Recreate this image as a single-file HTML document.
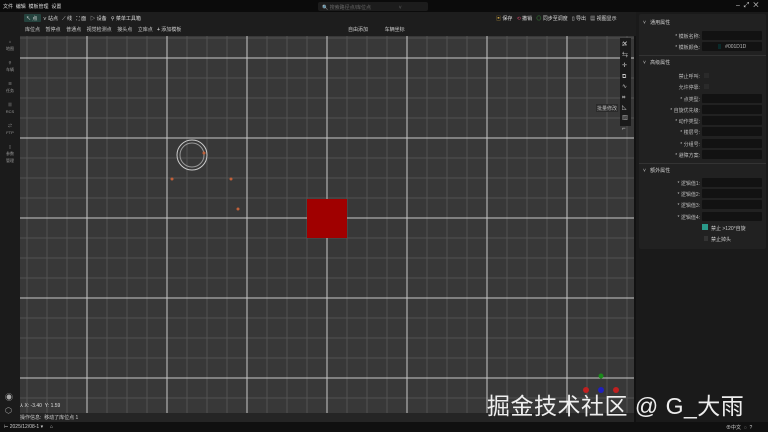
<!DOCTYPE html><html><head><meta charset="utf-8"><style>
*{margin:0;padding:0;box-sizing:border-box}
body{width:768px;height:432px;background:#121212;font-family:"Liberation Sans","Noto Sans CJK SC",sans-serif;color:#ccc;font-size:5px;position:relative;overflow:hidden}
.a{position:absolute;white-space:nowrap}
.in{position:absolute;left:702px;width:60px;height:9px;background:#121212;border-radius:1px;white-space:nowrap}
.lb{position:absolute;right:68px;font-size:5px;color:#bbb}
</style></head><body>
<div class="a" style="left:0;top:0;width:768px;height:12px;background:#0b0b0b"></div>
<div class="a" style="left:3px;top:3px;color:#ddd">文件 &nbsp;编辑 &nbsp;模板管理 &nbsp;设置</div>
<div class="a" style="left:318px;top:2px;width:110px;height:9px;background:#1c1c1c;border-radius:2px;color:#666;padding:2px 4px">🔍 搜索路径点/库位点 &nbsp;&nbsp;&nbsp;&nbsp;&nbsp;&nbsp;&nbsp;&nbsp;&nbsp;&nbsp;&nbsp;&nbsp;&nbsp;&nbsp;&nbsp;&nbsp;&nbsp;&nbsp;&nbsp;˅</div>
<div class="a" style="left:736px;top:2px;color:#ccc;font-size:7px">–&nbsp; ⤢&nbsp; ✕</div>
<div class="a" style="left:0;top:12px;width:636px;height:24px;background:#1d1d1d"></div>
<div class="a" style="left:24px;top:14px;width:17px;height:8px;background:#24423d;border-radius:1px"></div>
<div class="a" style="left:26px;top:15px;color:#ddd">↖ 点 &nbsp;&nbsp; ⋎ 站点 &nbsp;&nbsp;⟋ 线 &nbsp;&nbsp;⛶ 面 &nbsp;&nbsp;▷ 设备 &nbsp;&nbsp;⚲ 菜单工具箱</div>
<div class="a" style="left:25px;top:26px;color:#ccc">库位点 &nbsp;&nbsp;&nbsp;暂停点 &nbsp;&nbsp;&nbsp;普通点 &nbsp;&nbsp;&nbsp;视觉检测点 &nbsp;&nbsp;&nbsp;接头点 &nbsp;&nbsp;&nbsp;立库点 &nbsp;&nbsp;<b>+</b> 添加模板</div>
<div class="a" style="left:348px;top:26px;color:#ccc">自由添加 &nbsp;&nbsp;&nbsp;&nbsp;&nbsp;&nbsp;&nbsp;&nbsp;&nbsp;&nbsp;&nbsp;车辆坐标</div>
<div class="a" style="left:496px;top:15px;color:#ddd"><span style="color:#c9a040">▣</span> 保存 &nbsp;&nbsp;<span style="color:#c04060">⟲</span> 撤销 &nbsp;&nbsp;<span style="color:#40a040">◎</span> 同步至调度 &nbsp;&nbsp;▯ 导出 &nbsp;&nbsp;▦ 视图显示</div>
<div class="a" style="left:0;top:12px;width:20px;height:420px;background:#1b1b1b"></div>
<div class="a" style="left:5px;top:38px;color:#999;font-size:4px;line-height:7px;text-align:center;width:10px">⌂<br>地图<br><br>⚲<br>车辆<br><br>☰<br>任务<br><br>▦<br>RCS<br><br>⇄<br>FTP<br><br>▯<br>参数<br>管理</div>
<div class="a" style="left:5px;top:392px;color:#aaa;font-size:8px">◉</div>
<div class="a" style="left:5px;top:406px;color:#aaa;font-size:8px">⬡</div>
<svg class="a" style="left:20px;top:36px" width="614" height="377">
<rect width="614" height="377" fill="#383838"/>
<g stroke="#525252" stroke-width="1">
<path d="M7 0V377M27 0V377M47 0V377M87 0V377M107 0V377M127 0V377M167 0V377M187 0V377M207 0V377M247 0V377M267 0V377M287 0V377M327 0V377M347 0V377M367 0V377M407 0V377M427 0V377M447 0V377M487 0V377M507 0V377M527 0V377M567 0V377M587 0V377M607 0V377"/>
<path d="M0 2H614M0 42H614M0 62H614M0 82H614M0 122H614M0 142H614M0 162H614M0 202H614M0 222H614M0 242H614M0 282H614M0 302H614M0 322H614M0 362H614"/>
</g>
<g stroke="#c8c8c8" stroke-width="1">
<path d="M67 0V377M147 0V377M227 0V377M307 0V377M387 0V377M467 0V377M547 0V377"/>
<path d="M0 22H614M0 102H614M0 182H614M0 262H614M0 342H614"/>
</g>
<rect x="287" y="163" width="40" height="39" fill="#a00000"/>
<circle cx="172" cy="119" r="15" fill="none" stroke="#ccc" stroke-width="1"/>
<circle cx="172" cy="119" r="12" fill="none" stroke="#999" stroke-width="1"/>
<g fill="#c0603a"><circle cx="184" cy="117" r="1.5"/><circle cx="152" cy="143" r="1.5"/><circle cx="211" cy="143" r="1.5"/><circle cx="218" cy="173" r="1.5"/></g>
<rect x="600" y="2" width="11" height="88" fill="#1a1a1a"/>
<text x="602" y="10" fill="#ccc" font-size="7">✕</text>
<rect x="576" y="68" width="22" height="8" fill="#2a2a2a"/>
<text x="577" y="74" fill="#bbb" font-size="5">批量修改</text>
<circle cx="581" cy="340" r="2.5" fill="#1a8a1a"/>
<circle cx="581" cy="354" r="3" fill="#2020c0"/>
<circle cx="596" cy="354" r="3" fill="#c02020"/>
<circle cx="566" cy="354" r="3" fill="#c02020"/>
</svg>
<div class="a" style="left:622px;top:40px;color:#ccc;font-size:6px;line-height:10.5px">□<br>⇆<br>✛<br>⧉<br>∿<br>⌗<br>◺<br>▨<br>⌐</div>
<div class="a" style="left:20px;top:403px;color:#ddd">⅄ X: -3.40 &nbsp;Y: 1.59</div>
<div class="a" style="left:20px;top:413px;width:614px;height:9px;background:#252525"></div>
<div class="a" style="left:20px;top:414px;color:#ccc">操作信息: &nbsp;移动了库位点 1</div>
<div class="a" style="left:0;top:422px;width:768px;height:10px;background:#101010"></div>
<div class="a" style="left:4px;top:424px;color:#ccc">⊢ 2025/12/08-1 ▾ &nbsp;&nbsp;&nbsp;&nbsp;⌂</div>
<div class="a" style="left:726px;top:424px;color:#ccc">⊕中文 &nbsp;◌ &nbsp;?</div>
<div class="a" style="left:636px;top:12px;width:132px;height:410px;background:#1a1a1a"></div>
<div class="a" style="left:639px;top:14px;width:127px;height:235px;background:#212121;border-radius:2px"></div>
<div class="a" style="left:643px;top:19px;color:#ccc">˅ &nbsp;&nbsp;通用属性</div>
<div class="lb" style="top:33px">* 模板名称:</div><div class="in" style="top:31px"></div>
<div class="lb" style="top:44px">* 模板颜色:</div><div class="in" style="top:42px;color:#bbb;padding:2px 0 0 16px;font-size:5px"><span style="display:inline-block;width:3px;height:5px;background:#0a2a2a;vertical-align:top"></span> &nbsp;&nbsp;#001D1D</div>
<div class="a" style="left:639px;top:55px;width:127px;height:1px;background:#333"></div>
<div class="a" style="left:643px;top:59px;color:#ccc">˅ &nbsp;&nbsp;高级属性</div>
<div class="lb" style="top:73px">禁止呼叫:</div><div class="a" style="left:704px;top:73px;width:5px;height:5px;background:#2a2a2a"></div>
<div class="lb" style="top:84px">允许停靠:</div><div class="a" style="left:704px;top:84px;width:5px;height:5px;background:#2a2a2a"></div>
<div class="lb" style="top:96px">* 点类型:</div><div class="in" style="top:94px"></div>
<div class="lb" style="top:107px">* 自旋优先级:</div><div class="in" style="top:105px"></div>
<div class="lb" style="top:118px">* 动作类型:</div><div class="in" style="top:116px"></div>
<div class="lb" style="top:129px">* 楼层号:</div><div class="in" style="top:127px"></div>
<div class="lb" style="top:141px">* 分组号:</div><div class="in" style="top:139px"></div>
<div class="lb" style="top:152px">* 避障方案:</div><div class="in" style="top:150px"></div>
<div class="a" style="left:639px;top:163px;width:127px;height:1px;background:#333"></div>
<div class="a" style="left:643px;top:167px;color:#ccc">˅ &nbsp;&nbsp;额外属性</div>
<div class="lb" style="top:180px">* 逻辑值1:</div><div class="in" style="top:178px"></div>
<div class="lb" style="top:191px">* 逻辑值2:</div><div class="in" style="top:189px"></div>
<div class="lb" style="top:202px">* 逻辑值3:</div><div class="in" style="top:200px"></div>
<div class="lb" style="top:214px">* 逻辑值4:</div><div class="in" style="top:212px"></div>
<div class="a" style="left:702px;top:224px;width:6px;height:6px;background:#2a9a8a"></div>
<div class="a" style="left:711px;top:225px;color:#ccc">禁止 >120°自旋</div>
<div class="a" style="left:704px;top:236px;width:4px;height:5px;background:#333"></div>
<div class="a" style="left:711px;top:236px;color:#ccc">禁止掉头</div>
<div class="a" style="left:487px;top:387px;color:#fff;font-size:23px;letter-spacing:0.5px;opacity:.92">掘金技术社区 @ G_大雨</div>
</body></html>
